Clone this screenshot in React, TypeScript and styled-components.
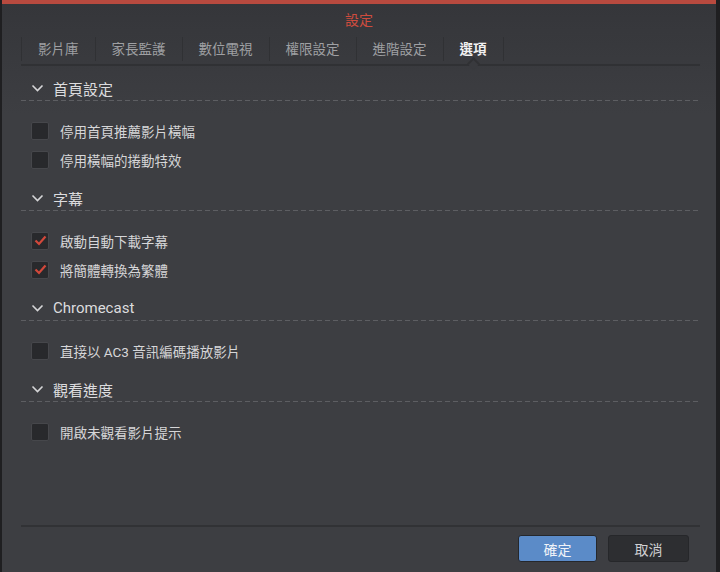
import React from "react";
import styled, { createGlobalStyle } from "styled-components";

const GlobalStyle = createGlobalStyle`
  html, body {
    margin: 0;
    padding: 0;
    background: #1f1f21;
    height: 100%;
  }
  #root {
    height: 100%;
  }
  * {
    box-sizing: border-box;
  }
`;

const FONT = `Roboto, "Noto Sans CJK TC", "Noto Sans", sans-serif`;

const Dialog = styled.div`
  display: flex;
  flex-direction: column;
  height: 572px;
  margin: 0 4px 0 2px;
  border-top: 4px solid #b84a3f;
  background: linear-gradient(#35363a, #3d3e42 110px, #3d3e42);
  font-family: ${FONT};
  color: #d4d4d6;
`;

const Title = styled.div`
  height: 31px;
  line-height: 32px;
  text-align: center;
  font-size: 14px;
  color: #cf4c3e;
`;

const TabBar = styled.div`
  display: flex;
  margin: 2px 16px 0 19px;
  padding-bottom: 3px;
  border-bottom: 2px solid #303134;
`;

const Tab = styled.div<{ $active?: boolean }>`
  position: relative;
  height: 24px;
  line-height: 24px;
  padding: 0 16px;
  font-size: 13.5px;
  border-left: 1px solid #303134;
  color: ${(p) => (p.$active ? "#f2f2f2" : "#9fa0a3")};
  font-weight: ${(p) => (p.$active ? 700 : 400)};

  &:last-child {
    border-right: 1px solid #303134;
  }

  ${(p) =>
    p.$active &&
    `
    &::after {
      content: "";
      position: absolute;
      left: 50%;
      bottom: -7px;
      width: 7px;
      height: 7px;
      margin-left: -4px;
      background: #393a3e;
      border-top: 2px solid #303134;
      border-left: 2px solid #303134;
      transform: rotate(45deg);
    }
  `}
`;

const Content = styled.div`
  flex: 1;
  padding: 0 16px 0 19px;
`;

const Section = styled.div`
  margin-top: 12px;
  &:first-child {
    margin-top: 10px;
  }
`;

const SectionHeader = styled.div`
  display: flex;
  align-items: center;
  gap: 9px;
  height: 25px;
  padding-left: 10px;
  padding-bottom: 1px;
  font-size: 15px;
  color: #dcdcde;
  background-image: repeating-linear-gradient(
    to right,
    #5d5e62 0,
    #5d5e62 5px,
    transparent 5px,
    transparent 8px
  );
  background-size: 100% 1px;
  background-position: bottom left;
  background-repeat: no-repeat;
`;

const Chevron = styled.svg`
  width: 13px;
  height: 8px;
  flex: none;
`;

const Options = styled.div`
  padding-top: 15px;
`;

const Row = styled.label`
  display: flex;
  align-items: center;
  gap: 11px;
  height: 29px;
  padding-left: 10px;
  font-size: 13.5px;
  color: #d6d6d8;
`;

const Box = styled.span`
  display: flex;
  align-items: center;
  justify-content: center;
  width: 18px;
  height: 18px;
  flex: none;
  background: #28292c;
  border: 1px solid #46474b;
  border-radius: 2px;
`;

const Footer = styled.div`
  display: flex;
  justify-content: flex-end;
  gap: 11px;
  margin: 0 16px 0 19px;
  padding: 8px 11px 10px 0;
  border-top: 2px solid #313235;
`;

const Button = styled.button<{ $primary?: boolean }>`
  width: ${(p) => (p.$primary ? "79px" : "81px")};
  height: 27px;
  font-family: ${FONT};
  font-size: 14px;
  border-radius: 3px;
  cursor: pointer;
  border: 1px solid ${(p) => (p.$primary ? "#25272b" : "#26272a")};
  background: ${(p) => (p.$primary ? "#5b8bc8" : "#2d2e31")};
  color: ${(p) => (p.$primary ? "#f0f3f8" : "#d0d0d2")};
`;

const ChevronIcon = () => (
  <Chevron viewBox="0 0 13 8">
    <polyline
      points="1.5,1.5 6.5,6.5 11.5,1.5"
      fill="none"
      stroke="#d6d6d8"
      strokeWidth="1.6"
    />
  </Chevron>
);

const CheckIcon = () => (
  <svg width="13" height="11" viewBox="0 0 13 11">
    <polyline
      points="1.5,5.5 5,9 11.5,1.5"
      fill="none"
      stroke="#d2483b"
      strokeWidth="2.2"
    />
  </svg>
);

type Option = { label: string; checked?: boolean };

const sections: { title: string; options: Option[] }[] = [
  {
    title: "首頁設定",
    options: [{ label: "停用首頁推薦影片橫幅" }, { label: "停用橫幅的捲動特效" }],
  },
  {
    title: "字幕",
    options: [
      { label: "啟動自動下載字幕", checked: true },
      { label: "將簡體轉換為繁體", checked: true },
    ],
  },
  {
    title: "Chromecast",
    options: [{ label: "直接以 AC3 音訊編碼播放影片" }],
  },
  {
    title: "觀看進度",
    options: [{ label: "開啟未觀看影片提示" }],
  },
];

const tabs = ["影片庫", "家長監護", "數位電視", "權限設定", "進階設定", "選項"];

export default function App() {
  return (
    <>
      <GlobalStyle />
      <Dialog>
        <Title>設定</Title>
        <TabBar>
          {tabs.map((t) => (
            <Tab key={t} $active={t === "選項"}>
              {t}
            </Tab>
          ))}
        </TabBar>
        <Content>
          {sections.map((s) => (
            <Section key={s.title}>
              <SectionHeader>
                <ChevronIcon />
                {s.title}
              </SectionHeader>
              <Options>
                {s.options.map((o) => (
                  <Row key={o.label}>
                    <Box>{o.checked && <CheckIcon />}</Box>
                    {o.label}
                  </Row>
                ))}
              </Options>
            </Section>
          ))}
        </Content>
        <Footer>
          <Button $primary>確定</Button>
          <Button>取消</Button>
        </Footer>
      </Dialog>
    </>
  );
}
